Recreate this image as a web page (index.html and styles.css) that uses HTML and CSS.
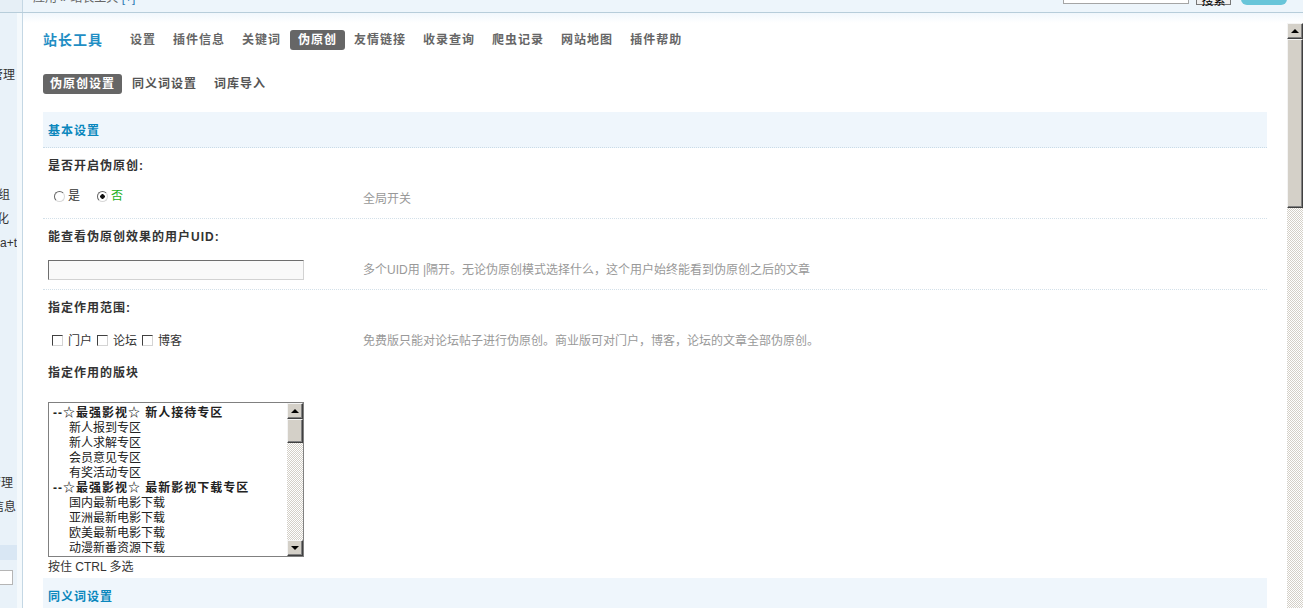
FILE: index.html
```html
<!doctype html>
<html lang="zh-CN">
  <head>
    <meta charset="utf-8">
    <title>站长工具 - 伪原创设置</title>
    <link rel="stylesheet" href="styles.css">
  </head>
  <body>
    <div class="topbar">
      <div class="topbar_side"></div>
      <div class="crumb">应用 &raquo; 站长工具 <a href="#">[+]</a></div>
      <div class="top_search">
        <div class="search_box"></div>
        <button class="search_btn">搜索</button>
        <span class="top_pill"></span>
      </div>
    </div>

    <div class="layout">
      <div class="sidebar">
        <div class="side_inner">
          <div class="side_item pr2"><span>用户管理</span></div>
          <div class="side_item"></div>
          <div class="side_item"></div>
          <div class="side_item"></div>
          <div class="side_item"></div>
          <div class="side_item pr7"><span>用户组</span></div>
          <div class="side_item pr8"><span>界面优化</span></div>
          <div class="side_item"><span>+a+t</span></div>
          <div class="side_item"></div>
          <div class="side_item"></div>
          <div class="side_item"></div>
          <div class="side_item"></div>
          <div class="side_item"></div>
          <div class="side_item"></div>
          <div class="side_item"></div>
          <div class="side_item"></div>
          <div class="side_item"></div>
          <div class="side_item pr4"><span>插件管理</span></div>
          <div class="side_item pr1"><span>站点信息</span></div>
          <div class="side_hl"></div>
          <div class="side_input"></div>
        </div>
      </div>

      <div class="main">
        <div class="main_strip"></div>
        <div class="frame">
          <div class="content">

            <div class="nav">
              <h1 class="nav_title">站长工具</h1>
              <ul class="nav_tabs">
                <li><a href="#">设置</a></li>
                <li><a href="#">插件信息</a></li>
                <li><a href="#">关键词</a></li>
                <li class="current"><a href="#">伪原创</a></li>
                <li><a href="#">友情链接</a></li>
                <li><a href="#">收录查询</a></li>
                <li><a href="#">爬虫记录</a></li>
                <li><a href="#">网站地图</a></li>
                <li><a href="#">插件帮助</a></li>
              </ul>
            </div>

            <ul class="subnav">
              <li class="current">伪原创设置</li>
              <li>同义词设置</li>
              <li>词库导入</li>
            </ul>

            <div class="sec_head">基本设置</div>

            <div class="set_label">是否开启伪原创:</div>
            <div class="set_row">
              <div class="set_field radios">
                <label class="radio"><input type="radio" name="open">是</label>
                <label class="radio on"><input type="radio" name="open" checked>否</label>
              </div>
              <div class="set_tip">全局开关</div>
            </div>

            <div class="set_label">能查看伪原创效果的用户UID:</div>
            <div class="set_row">
              <div class="set_field"><input class="txt" type="text"></div>
              <div class="set_tip">多个UID用 |隔开。无论伪原创模式选择什么，这个用户始终能看到伪原创之后的文章</div>
            </div>

            <div class="set_label">指定作用范围:</div>
            <div class="set_row noborder">
              <div class="set_field">
                <label class="check"><input type="checkbox">门户</label>
                <label class="check"><input type="checkbox">论坛</label>
                <label class="check"><input type="checkbox">博客</label>
              </div>
              <div class="set_tip">免费版只能对论坛帖子进行伪原创。商业版可对门户，博客，论坛的文章全部伪原创。</div>
            </div>

            <div class="set_label">指定作用的版块</div>
            <div class="set_row select_row">
              <div class="forum_select">
                <div class="fs_list">
                  <div class="fs_group">--☆最强影视☆ 新人接待专区</div>
                  <div class="fs_item">新人报到专区</div>
                  <div class="fs_item">新人求解专区</div>
                  <div class="fs_item">会员意见专区</div>
                  <div class="fs_item">有奖活动专区</div>
                  <div class="fs_group">--☆最强影视☆ 最新影视下载专区</div>
                  <div class="fs_item">国内最新电影下载</div>
                  <div class="fs_item">亚洲最新电影下载</div>
                  <div class="fs_item">欧美最新电影下载</div>
                  <div class="fs_item">动漫新番资源下载</div>
                </div>
                <div class="sbar">
                  <span class="sb_btn sb_up"></span>
                  <span class="sb_thumb small"></span>
                  <span class="sb_track"></span>
                  <span class="sb_btn sb_down"></span>
                </div>
              </div>
              <div class="select_note">按住 CTRL 多选</div>
            </div>

            <div class="sec_head next">同义词设置</div>

          </div>
          <div class="sbar page_bar">
            <span class="sb_btn sb_up"></span>
            <span class="sb_thumb big"></span>
            <span class="sb_track"></span>
          </div>
        </div>
      </div>
    </div>
  </body>
</html>
```

FILE: styles.css
```css
* {
  box-sizing: border-box;
}

body {
  margin: 0;
  width: 1303px;
  height: 608px;
  overflow: hidden;
  background: #fff;
  color: #333;
  font: 12px/15px "Liberation Sans", "Noto Sans CJK SC", sans-serif;
}

ul {
  margin: 0;
  padding: 0;
  list-style: none;
}

a {
  color: inherit;
  text-decoration: none;
}

/* top bar, mostly scrolled out of view */
.topbar {
  display: flex;
  align-items: flex-end;
  height: 13px;
  overflow: hidden;
  background: #edf5fb;
  border-bottom: 1px solid #b7cdda;
}

.topbar_side {
  align-self: stretch;
  width: 23px;
  flex-shrink: 0;
  background: #e6eff6;
  border-right: 1px solid #c4d7e4;
}

.crumb {
  padding-left: 10px;
  margin-bottom: 7px;
  line-height: 14px;
  color: #666;
  white-space: nowrap;
}

.crumb a {
  color: #2b7bb5;
}

.top_search {
  display: flex;
  align-items: flex-end;
  margin-left: auto;
  padding-right: 16px;
}

.search_box {
  width: 126px;
  height: 20px;
  margin-bottom: 8px;
  border: 1px solid #a5a5a5;
  background: #fff;
}

.search_btn {
  width: 35px;
  height: 20px;
  margin: 0 10px 7px 7px;
  padding: 0;
  border: 1px solid #777;
  background: #efefef;
  line-height: 30px;
  font: 12px/30px "Liberation Sans", "Noto Sans CJK SC", sans-serif;
}

.top_pill {
  width: 46px;
  height: 24px;
  margin-bottom: 7px;
  border-radius: 6px;
  background: #68c5d9;
}

/* page body */
.layout {
  display: flex;
  height: 595px;
}

.sidebar {
  width: 23px;
  flex-shrink: 0;
  background: #f4f9fc;
  border-right: 1px solid #c4d7e4;
}

.side_inner {
  width: 17px;
  height: 100%;
  padding-top: 50px;
  background: #e9f2f9;
}

.side_item {
  display: flex;
  justify-content: flex-end;
  height: 24px;
  line-height: 24px;
  overflow: hidden;
  white-space: nowrap;
}

.side_item span {
  flex-shrink: 0;
}

.pr1 { padding-right: 1px; }
.pr2 { padding-right: 2px; }
.pr4 { padding-right: 4px; }
.pr7 { padding-right: 7px; }
.pr8 { padding-right: 8px; }

.side_hl {
  height: 15px;
  margin-top: 26px;
  background: #d9e7f4;
}

.side_input {
  width: 13px;
  height: 15px;
  margin-top: 10px;
  border: 1px solid #b5b5b5;
  border-left: 0;
  background: #fff;
}

.main {
  flex: 1;
  min-width: 0;
  display: flex;
  flex-direction: column;
}

.main_strip {
  height: 10px;
  background: linear-gradient(#f1f7fc, #fff);
}

.frame {
  flex: 1;
  min-height: 0;
  display: flex;
}

.content {
  flex: 1;
  padding: 7px 20px 0;
  overflow: hidden;
}

/* tabs */
.nav {
  display: flex;
  align-items: center;
  height: 20px;
}

.nav_title {
  margin: 0 19px 0 0;
  font-size: 14px;
  line-height: 20px;
  letter-spacing: 1px;
  color: #1f8ec4;
}

.nav_tabs {
  display: flex;
}

.nav_tabs li {
  margin-right: 1px;
}

.nav_tabs a {
  display: block;
  padding: 0 8px;
  line-height: 20px;
  font-weight: bold;
  letter-spacing: 1px;
  color: #666;
  border-radius: 3px;
}

.nav_tabs .current a {
  background: #666;
  color: #fff;
}

.subnav {
  display: flex;
  margin-top: 24px;
}

.subnav li {
  padding: 0 7px;
  margin-right: 3px;
  line-height: 20px;
  font-weight: bold;
  letter-spacing: 1px;
  color: #555;
  border-radius: 3px;
}

.subnav .current {
  background: #666;
  color: #fff;
}

/* settings table */
.sec_head {
  height: 36px;
  margin-top: 18px;
  padding: 3px 0 0 5px;
  line-height: 32px;
  background: #eff6fc;
  border-bottom: 1px dotted #c9dbe7;
  color: #0a87bd;
  font-weight: bold;
  letter-spacing: 1px;
}

.sec_head.next {
  margin-top: 3px;
}

.set_label {
  padding: 11px 5px 0;
  line-height: 15px;
  font-weight: bold;
  letter-spacing: 1px;
}

.set_row {
  display: flex;
  align-items: center;
  height: 45px;
  padding: 15px 0 9px 5px;
  border-bottom: 1px dotted #d3e0e9;
}

.set_row.noborder {
  height: 39px;
  padding-bottom: 4px;
  border-bottom: 0;
}

.set_field {
  width: 315px;
  flex-shrink: 0;
  display: flex;
  align-items: center;
}

.radios {
  margin-bottom: 5px;
}

.set_tip {
  color: #999;
  white-space: nowrap;
}

.radio {
  display: flex;
  align-items: center;
  margin-right: 11px;
}

.radio.on {
  color: #22b022;
}

.radio input {
  appearance: none;
  width: 11px;
  height: 11px;
  margin: 0 3px 0 6px;
  border: 1px solid;
  border-color: #666 #d8d8d8 #d8d8d8 #666;
  border-radius: 50%;
  background: #fff;
}

.radio input:checked {
  background: radial-gradient(circle, #111 0 2px, #fff 2.5px);
}

.check {
  display: flex;
  align-items: center;
  margin-right: 1px;
}

.check input {
  appearance: none;
  width: 11px;
  height: 11px;
  margin: 0 5px 2px 4px;
  border: 1px solid;
  border-color: #404040 #d4d4d4 #d4d4d4 #404040;
  background: #fff;
}

.txt {
  width: 256px;
  height: 20px;
  margin: 0;
  padding: 0 3px;
  border: 1px solid;
  border-color: #6e6e6e #d2d2d2 #d2d2d2 #6e6e6e;
  background: #f9f9f9;
}

.set_row.select_row {
  display: block;
  height: auto;
  padding: 21px 0 0 5px;
  border-bottom: 0;
}

.forum_select {
  display: flex;
  width: 256px;
  height: 155px;
  border: 1px solid #808080;
  background: #fff;
}

.fs_list {
  flex: 1;
  padding: 3px 0 0 4px;
  overflow: hidden;
  color: #222;
}

.fs_list div {
  line-height: 15px;
  white-space: nowrap;
}

.fs_group {
  font-weight: bold;
  letter-spacing: 1px;
}

.fs_item {
  padding-left: 16px;
}

.select_note {
  margin-top: 3px;
  line-height: 15px;
}

/* classic scrollbars */
.sbar {
  width: 16px;
  flex-shrink: 0;
  display: flex;
  flex-direction: column;
}

.sb_btn,
.sb_thumb {
  flex-shrink: 0;
  background: #d4d0c8;
  border: 1px solid;
  border-color: #f4f4f4 #404040 #404040 #f4f4f4;
  box-shadow: inset -1px -1px #808080;
}

.sb_btn {
  height: 16px;
  display: flex;
  align-items: center;
  justify-content: center;
}

.sb_up::after,
.sb_down::after {
  content: "";
  border-left: 4px solid transparent;
  border-right: 4px solid transparent;
}

.sb_up::after {
  border-bottom: 4px solid #000;
  margin-bottom: 1px;
}

.sb_down::after {
  border-top: 4px solid #000;
}

.sb_thumb.small {
  height: 24px;
}

.sb_thumb.big {
  height: 169px;
}

.sb_track {
  flex: 1;
  background: repeating-conic-gradient(#d4d0c8 0 25%, #fff 0 50%) 0 0 / 2px 2px;
}
```
